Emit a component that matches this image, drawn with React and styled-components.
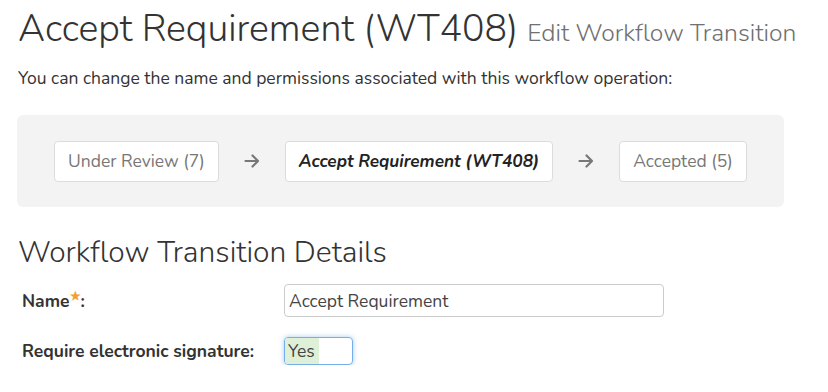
import React from "react";
import styled, { createGlobalStyle } from "styled-components";

const GlobalStyle = createGlobalStyle`
  body {
    margin: 0;
    background: #fff;
    font-family: "Nunito", Lato, "Open Sans", sans-serif;
    color: #333;
  }
`;

const Page = styled.div`
  padding: 4px 18px 0 18px;
`;

const TitleRow = styled.h1`
  margin: 0;
  font-weight: 300;
  font-size: 37.5px;
  line-height: 50px;
  color: #333;
  white-space: nowrap;
`;

const Sub = styled.small`
  font-size: 24.7px;
  color: #707070;
  margin-left: 9px;
`;

const Intro = styled.p`
  margin: 8px 0 0;
  font-size: 17.5px;
  line-height: 24px;
`;

const Flow = styled.div`
  margin-top: 25px;
  width: 767px;
  height: 92px;
  box-sizing: border-box;
  background: #f3f3f3;
  border-radius: 6px;
  display: flex;
  align-items: center;
  padding-left: 37px;
  margin-left: -1px;
`;

const Step = styled.div`
  height: 41px;
  box-sizing: border-box;
  padding: 0 13px;
  display: flex;
  align-items: center;
  background: #fff;
  border: 1px solid #dcdcdc;
  border-radius: 4px;
  font-size: ${(p) => (p.current ? "17.2px" : "17.5px")};
  color: ${(p) => (p.current ? "#222" : "#777")};
  font-weight: ${(p) => (p.current ? 700 : 400)};
  font-style: ${(p) => (p.current ? "italic" : "normal")};
`;

const Arrow = styled.div`
  width: 66px;
  display: flex;
  justify-content: center;
  color: #777;
`;

const Section = styled.h2`
  margin: 28px 0 0;
  font-weight: 300;
  font-size: 30px;
  line-height: 36px;
  color: #333;
`;

const Form = styled.div`
  display: grid;
  grid-template-columns: 266px 380px;
  row-gap: 20px;
  margin-top: 13px;
  align-items: center;
`;

const Label = styled.label`
  padding-left: 4px;
  font-weight: 700;
  font-size: 17.5px;
  color: #333;
`;

const Star = styled.sup`
  color: #f0a030;
  font-size: 12px;
  line-height: 0;
`;

const Input = styled.div`
  height: 33px;
  box-sizing: border-box;
  border: 1px solid #ccc;
  border-radius: 4px;
  display: flex;
  align-items: center;
  padding-left: 4px;
  font-size: 17.5px;
  color: #444;
`;

const Toggle = styled.div`
  width: 69px;
  height: 28px;
  box-sizing: border-box;
  border: 1px solid #75aee8;
  border-radius: 4px;
  box-shadow: 0 0 5px rgba(80, 150, 230, 0.5);
  display: flex;
  overflow: hidden;
`;

const ToggleOn = styled.div`
  width: 34px;
  background: #dff0d8;
  display: flex;
  align-items: center;
  padding-left: 3px;
  box-sizing: border-box;
  font-size: 17.5px;
  color: #444;
`;

const ArrowIcon = () => (
  <svg width="16" height="14" viewBox="0 0 16 14" fill="none" stroke="currentColor" strokeWidth="2.2" strokeLinecap="round" strokeLinejoin="round">
    <path d="M1.5 7h12.5M8.5 1.5 14 7l-5.5 5.5" />
  </svg>
);

export default function App() {
  return (
    <>
      <GlobalStyle />
      <Page>
        <TitleRow>
          Accept Requirement (WT408)<Sub>Edit Workflow Transition</Sub>
        </TitleRow>
        <Intro>You can change the name and permissions associated with this workflow operation:</Intro>
        <Flow>
          <Step>Under Review (7)</Step>
          <Arrow><ArrowIcon /></Arrow>
          <Step current>Accept Requirement (WT408)</Step>
          <Arrow><ArrowIcon /></Arrow>
          <Step>Accepted (5)</Step>
        </Flow>
        <Section>Workflow Transition Details</Section>
        <Form>
          <Label>Name<Star>★</Star>:</Label>
          <Input>Accept Requirement</Input>
          <Label>Require electronic signature:</Label>
          <Toggle><ToggleOn>Yes</ToggleOn></Toggle>
        </Form>
      </Page>
    </>
  );
}
